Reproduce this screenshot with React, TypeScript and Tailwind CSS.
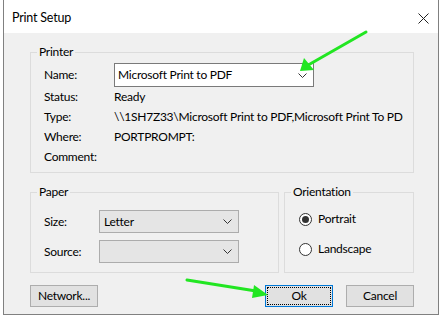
import * as React from "react"

function Chevron() {
  return (
    <svg width="9" height="5" viewBox="0 0 9 5" className="shrink-0">
      <path d="M0.5 0.5 L4.5 4.5 L8.5 0.5" fill="none" stroke="#333" strokeWidth="1" />
    </svg>
  )
}

function Group({ title, className, children }: { title: string; className: string; children: React.ReactNode }) {
  return (
    <div className={"relative border border-[#dcdcdc] " + className}>
      <span className="absolute left-[6px] top-[-9px] bg-[#f0f0f0] px-[2px] leading-[16px]">{title}</span>
      {children}
    </div>
  )
}

function Radio({ checked, label }: { checked?: boolean; label: string }) {
  return (
    <div className="flex h-[20px] items-center gap-[6px]">
      <div className="flex h-[13px] w-[13px] items-center justify-center rounded-full border border-[#333] bg-white">
        {checked && <div className="h-[7px] w-[7px] rounded-full bg-[#333]" />}
      </div>
      <span>{label}</span>
    </div>
  )
}

function Button({ label, focused }: { label: string; focused?: boolean }) {
  return (
    <div
      className={
        "flex h-[22px] w-[68px] items-center justify-center bg-[#e1e1e1] " +
        (focused
          ? "border border-[#0078d7] outline-1 outline-dotted outline-black outline-offset-[-3px]"
          : "border border-[#adadad]")
      }
    >
      {label}
    </div>
  )
}

export default function App() {
  return (
    <div
      className="relative h-[318px] w-[443px] overflow-hidden bg-white text-[12px] tracking-[-0.25px] text-black"
      style={{ fontFamily: 'Lato, "Noto Sans", sans-serif' }}
    >
      <div className="ml-[3px] flex h-[315px] w-[436px] flex-col border-x border-b border-[#808080]">
        {/* title bar */}
        <div className="flex h-[33px] items-center justify-between bg-white pl-[8px] pr-[9px]">
          <span className="pt-[4px] text-[12.5px] tracking-[-0.2px]">Print Setup</span>
          <svg width="11" height="11" viewBox="0 0 11 11" className="mt-[3px]">
            <path d="M0.5 0.5 L10.5 10.5 M10.5 0.5 L0.5 10.5" stroke="#222" strokeWidth="1" />
          </svg>
        </div>

        <div className="flex flex-1 flex-col bg-[#f0f0f0] pl-[26px] pt-[19px]">
          <Group title="Printer" className="h-[121px] w-[384px] pl-[13px] pt-[10px]">
            <div className="flex h-[24px] items-center">
              <span className="w-[70px]">Name:</span>
              <div className="flex h-[24px] w-[200px] items-center justify-between border border-[#7a7a7a] bg-white pl-[3px] pr-[6px]">
                <span>Microsoft Print to PDF</span>
                <Chevron />
              </div>
            </div>
            <div className="flex h-[20px] items-center">
              <span className="w-[70px]">Status:</span>
              <span>Ready</span>
            </div>
            <div className="flex h-[20px] items-center">
              <span className="w-[70px] shrink-0">Type:</span>
              <span className="w-[289px] overflow-hidden whitespace-nowrap">
                \\1SH7Z33\Microsoft Print to PDF,Microsoft Print To PDF
              </span>
            </div>
            <div className="flex h-[20px] items-center">
              <span className="w-[70px]">Where:</span>
              <span>PORTPROMPT:</span>
            </div>
            <div className="flex h-[20px] items-center">
              <span className="w-[70px]">Comment:</span>
            </div>
          </Group>

          <div className="mt-[19px] flex gap-[5px]">
            <Group title="Paper" className="h-[81px] w-[249px] pl-[13px] pt-[17px]">
              <div className="flex h-[23px] items-center">
                <span className="w-[55px]">Size:</span>
                <div className="flex h-[23px] w-[140px] items-center justify-between border border-[#acacac] bg-[#e5e5e5] pl-[4px] pr-[6px]">
                  <span>Letter</span>
                  <Chevron />
                </div>
              </div>
              <div className="mt-[7px] flex h-[23px] items-center">
                <span className="w-[55px]">Source:</span>
                <div className="flex h-[23px] w-[140px] items-center justify-end border border-[#acacac] bg-[#e5e5e5] pr-[6px]">
                  <Chevron />
                </div>
              </div>
            </Group>
            <Group title="Orientation" className="flex h-[81px] w-[130px] flex-col gap-[10px] pl-[14px] pt-[16px]">
              <Radio checked label="Portrait" />
              <Radio label="Landscape" />
            </Group>
          </div>

          <div className="mt-[12px] flex w-[384px]">
            <Button label="Network..." />
            <div className="ml-auto flex gap-[13px]">
              <Button label="Ok" focused />
              <Button label="Cancel" />
            </div>
          </div>
        </div>
      </div>

      {/* annotation arrows */}
      <svg className="pointer-events-none absolute left-0 top-0" width="443" height="318">
        <line x1="366" y1="32" x2="310" y2="64" stroke="#22e622" strokeWidth="3" strokeLinecap="round" />
        <polygon points="300,71 304,58 314,70" fill="#22e622" />
        <line x1="187" y1="280" x2="256" y2="291" stroke="#22e622" strokeWidth="3" strokeLinecap="round" />
        <polygon points="268,295 254,285 252,298" fill="#22e622" />
      </svg>
    </div>
  )
}
